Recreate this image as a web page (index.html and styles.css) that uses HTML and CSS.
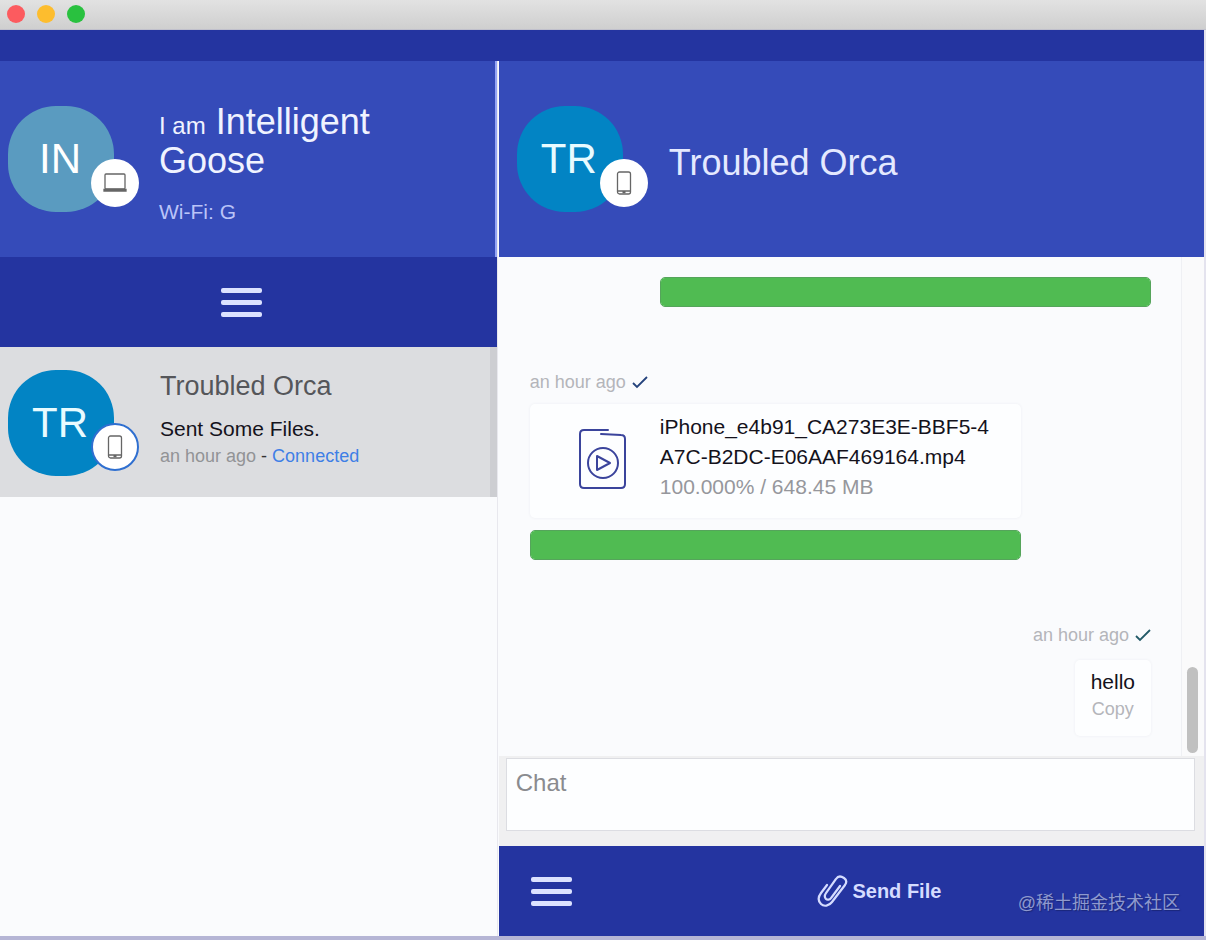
FILE: index.html
```html
<!DOCTYPE html>
<html lang="en">
<head>
    <meta charset="UTF-8">
    <meta name="viewport" content="width=device-width, initial-scale=1.0">
    <title>Troubled Orca</title>
    <link rel="stylesheet" href="styles.css">
</head>
<body>
<!-- Window title bar -->
<div class="titlebar">
    <button class="dot red" aria-label="Close"></button>
    <button class="dot yellow" aria-label="Minimize"></button>
    <button class="dot green" aria-label="Zoom"></button>
</div>
<div class="topbar"></div>

<div class="app">
    <!-- Left side: me and my contacts -->
    <aside class="sidebar">
        <header class="profile">
            <div class="avatar avatar-me">IN
                <span class="badge">
                    <svg width="24" height="20" viewBox="0 0 24 20" fill="none" stroke="#666" stroke-width="1.300">
                        <rect x="2" y="1" width="20" height="15" rx="1"/>
                        <path d="M1 16.500h22v1.500H1z"/>
                    </svg>
                </span>
            </div>
            <div class="profile-text">
                <h1><small>I am</small> Intelligent Goose</h1>
                <p>Wi-Fi: G</p>
            </div>
        </header>
        <nav class="side-menu">
            <button class="menu-button" aria-label="Menu"><span></span><span></span><span></span></button>
        </nav>
        <a class="contact" href="#chat">
            <div class="avatar">TR
                <span class="badge badge-online">
                    <svg width="16" height="24" viewBox="0 0 16 24" fill="none" stroke="#666" stroke-width="1.300">
                        <rect x="1.500" y="1" width="13" height="22" rx="2"/>
                        <path d="M2 20h12M6.500 21.500h3"/>
                    </svg>
                </span>
            </div>
            <div class="contact-text">
                <h2>Troubled Orca</h2>
                <p class="last-message">Sent Some Files.</p>
                <p class="status"><time>an hour ago</time> - <span>Connected</span></p>
            </div>
        </a>
    </aside>

    <!-- Right side: the conversation -->
    <main class="chat" id="chat">
        <header class="chat-header">
            <div class="avatar">TR
                <span class="badge">
                    <svg width="16" height="24" viewBox="0 0 16 24" fill="none" stroke="#666" stroke-width="1.300">
                        <rect x="1.500" y="1" width="13" height="22" rx="2"/>
                        <path d="M2 20h12M6.500 21.500h3"/>
                    </svg>
                </span>
            </div>
            <h2>Troubled Orca</h2>
        </header>

        <div class="history">
            <div class="messages">
                <div class="message sent file">
                    <progress value="100" max="100" aria-label="Sent"></progress>
                </div>
                <div class="message file">
                    <p class="time">an hour ago
                        <svg width="16" height="14" viewBox="0 0 16 14" fill="none" stroke="#24427c" stroke-width="1.800"><path d="M1 8l4 4L15 2"/></svg>
                    </p>
                    <div class="card file-card">
                        <svg class="file-icon" width="48" height="64" viewBox="0 -4 48 64" fill="none" stroke="#3b449c" stroke-width="2" stroke-linecap="round" stroke-linejoin="round">
                            <path d="M29 1H5q-4 0-4 4v50q0 4 4 4h37q4 0 4-4V10q0-4-4-4l-20-1"/>
                            <circle cx="24" cy="34" r="15"/>
                            <path d="M18 27v14l13-7z"/>
                        </svg>
                        <div class="file-text">
                            <p class="file-name">iPhone_e4b91_CA273E3E-BBF5-4A7C-B2DC-E06AAF469164.mp4</p>
                            <p class="file-size">100.000% / 648.45 MB</p>
                        </div>
                    </div>
                    <progress value="100" max="100" aria-label="Received"></progress>
                </div>
                <div class="message sent">
                    <p class="time">an hour ago
                        <svg width="16" height="14" viewBox="0 0 16 14" fill="none" stroke="#235a68" stroke-width="1.800"><path d="M1 8l4 4L15 2"/></svg>
                    </p>
                    <div class="card text-card">
                        <p>hello</p>
                        <button>Copy</button>
                    </div>
                </div>
            </div>
            <div class="scrollbar"><div class="thumb"></div></div>
        </div>

        <form class="composer">
            <textarea placeholder="Chat" aria-label="Chat"></textarea>
        </form>
        <footer class="toolbar">
            <button class="menu-button" aria-label="Menu"><span></span><span></span><span></span></button>
            <button class="send-file">
                <svg width="32" height="32" viewBox="0 0 32 32" fill="none" stroke="#d5dcff" stroke-width="2.200" stroke-linecap="round">
                    <path d="M10 10L4 18c-3 4-3 8 0 11s8 2 11-2l13-17c2-3 2-5-1-7s-6-2-8 1L9 18c-2 3-1 5 0 6s4 1 5-1l9-12"/>
                </svg>
                Send File
            </button>
        </footer>
    </main>
</div>
<div class="watermark">@稀土掘金技术社区</div>
</body>
</html>
```
FILE: styles.css
```css
* {
    box-sizing: border-box;
}
body {
    margin: 0;
    min-height: 100vh;
    display: flex;
    flex-direction: column;
    position: relative;
    font-family: "Liberation Sans", Arial, sans-serif;
    background-color: #fafbfd;
    border-bottom: 4px solid #b5b5d5;
}
h1, h2, p {
    margin: 0;
    font-weight: normal;
}
button {
    font-family: inherit;
    border: none;
    padding: 0;
    background: none;
    cursor: pointer;
}
.titlebar {
    height: 30px;
    padding: 0 7px 2px;
    display: flex;
    align-items: center;
    gap: 12px;
    background: linear-gradient(#e2e2e2, #cfcfcf);
    border-bottom: 1px solid #c0c0cc;
}
.dot {
    width: 18px;
    height: 18px;
    border-radius: 50%;
}
.red {
    background-color: #fc5b5f;
}
.yellow {
    background-color: #fdbd2e;
}
.green {
    background-color: #29c13f;
}
.topbar {
    height: 31px;
    background-color: #2434a0;
    border-right: 2px solid #e4e3ee;
}
.app {
    flex: 1;
    display: grid;
    grid-template-columns: 12fr 17fr;
    column-gap: 1px;
    border-right: 2px solid #e4e3ee;
}

/* Avatars */
.avatar {
    position: relative;
    flex: none;
    width: 106px;
    height: 106px;
    padding-right: 2px;
    border-radius: 48px;
    background-color: #0284c4;
    color: #e8fbff;
    font-size: 42px;
    line-height: 106px;
    text-align: center;
}
.avatar-me {
    background-color: #5a9bc0;
    color: #fff;
}
.badge {
    position: absolute;
    right: -25px;
    bottom: 5px;
    width: 48px;
    height: 48px;
    display: flex;
    align-items: center;
    justify-content: center;
    border-radius: 50%;
    background-color: #fff;
}
.badge-online {
    border: 2px solid #2f6fd0;
}

/* Sidebar */
.sidebar {
    border-right: 1px solid #e8e8ee;
}
.profile {
    height: 196px;
    padding: 0 60px 0 8px;
    display: flex;
    align-items: center;
    gap: 45px;
    background-color: #354bb9;
    color: #f0f3ff;
    border-right: 2px solid #93a4f5;
}
.profile h1 {
    font-size: 36px;
    line-height: 39px;
}
.profile small {
    font-size: 24px;
    line-height: 24px;
}
.profile p {
    margin-top: 20px;
    font-size: 21px;
    line-height: 24px;
    color: #bac4f8;
}
.profile-text {
    padding-top: 8px;
}
.side-menu {
    height: 90px;
    padding-right: 14px;
    display: flex;
    align-items: center;
    justify-content: center;
    background-color: #2434a0;
}
.menu-button {
    width: 41px;
    display: flex;
    flex-direction: column;
    gap: 7px;
}
.menu-button span {
    width: 100%;
    height: 5px;
    border-radius: 2px;
    background-color: #dce2ff;
}
.contact {
    height: 150px;
    padding-top: 2px;
    padding-left: 8px;
    display: flex;
    align-items: center;
    gap: 46px;
    background-color: #dcdde0;
    border-right: 7px solid #cdced2;
    color: inherit;
    text-decoration: none;
}
.contact-text {
    padding-bottom: 7px;
}
.contact h2 {
    font-size: 27px;
    line-height: 32px;
    color: #55565a;
}
.last-message {
    margin-top: 13px;
    font-size: 21px;
    line-height: 28px;
    color: #14121c;
}
.status {
    font-size: 18px;
    line-height: 26px;
    color: #333;
}
.status time {
    color: #929396;
}
.status span {
    color: #3f7fe6;
}

/* Chat */
.chat {
    display: flex;
    flex-direction: column;
}
.chat-header {
    height: 196px;
    padding-left: 18px;
    display: flex;
    align-items: center;
    gap: 46px;
    background-color: #354bb9;
    color: #e4e9ff;
}
.chat-header h2 {
    padding-top: 8px;
    font-size: 36px;
}
.history {
    flex: 1;
    display: flex;
}
.messages {
    flex: 1;
    padding: 20px 30px 16px 31px;
    display: flex;
    flex-direction: column;
    gap: 62px;
    border-right: 1px solid #eff0f4;
}
.message {
    display: flex;
    flex-direction: column;
    align-items: flex-start;
}
.sent {
    align-self: flex-end;
    align-items: flex-end;
}
.file {
    width: 79%;
}
progress {
    appearance: none;
    width: 100%;
    height: 30px;
    border: 1px solid #55a45b;
    border-radius: 5px;
    overflow: hidden;
}
progress::-webkit-progress-bar {
    background-color: #eee;
}
progress::-webkit-progress-value {
    background-color: #50bb52;
}
.time {
    display: flex;
    align-items: center;
    gap: 6px;
    font-size: 18px;
    line-height: 26px;
    color: #b4b5ba;
}
.card {
    margin-top: 9px;
    background-color: #fdfeff;
    border-radius: 5px;
    box-shadow: 0 0 3px #eceef3;
}
.file-card {
    width: 100%;
    margin-bottom: 12px;
    padding: 8px 26px 16px 49px;
    display: flex;
    align-items: center;
    gap: 33px;
}
.file-icon {
    flex: none;
}
.file-name {
    font-size: 21px;
    line-height: 30px;
    word-break: break-all;
    color: #14121c;
}
.file-size {
    font-size: 21px;
    line-height: 30px;
    color: #96979c;
}
.text-card {
    margin-top: 12px;
    padding: 8px 16px 14px;
    display: flex;
    flex-direction: column;
    align-items: center;
    font-size: 21px;
    line-height: 28px;
    color: #14121c;
}
.text-card button {
    font-size: 18px;
    line-height: 26px;
    color: #b4b5ba;
}
.scrollbar {
    width: 22px;
    padding: 3px 5px;
    display: flex;
    align-items: flex-end;
    background-color: #fafafb;
}
.thumb {
    width: 11px;
    height: 86px;
    border-radius: 6px;
    background-color: #c0c0c0;
}
.composer {
    padding: 2px 9px 15px 7px;
    display: flex;
    background-color: #f0f0f1;
}
.composer textarea {
    flex: 1;
    height: 73px;
    padding: 10px 9px;
    border: 1px solid #dcdde2;
    font-family: inherit;
    font-size: 24px;
    line-height: 28px;
    resize: none;
    background-color: #fdfeff;
}
.composer textarea::placeholder {
    color: #8a8b8f;
}
.toolbar {
    height: 90px;
    padding: 0 17px 0 32px;
    display: flex;
    align-items: center;
    background-color: #2434a0;
}
.send-file {
    margin: 0 auto;
    display: flex;
    align-items: center;
    gap: 3px;
    font-size: 20px;
    font-weight: bold;
    color: #d5dcff;
}
.watermark {
    position: absolute;
    right: 26px;
    bottom: 18px;
    font-family: "Liberation Sans", "Noto Sans CJK SC", sans-serif;
    font-size: 18px;
    line-height: 30px;
    color: #8e99ce;
    text-shadow: 1px 1px 1px #1a2678;
}
```
